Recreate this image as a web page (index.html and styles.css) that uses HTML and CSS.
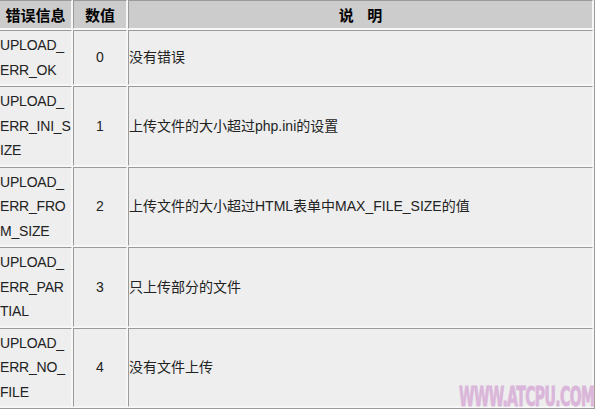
FILE: index.html
```html
<!DOCTYPE html>
<html lang="zh-CN">
<head>
<meta charset="utf-8">
<title>上传错误信息</title>
<link rel="stylesheet" href="styles.css">
</head>
<body>
<div class="wrap">
<table class="errors">
  <colgroup>
    <col class="c-name">
    <col class="c-num">
    <col class="c-desc">
  </colgroup>
  <thead>
    <tr>
      <th>错误信息</th>
      <th>数值</th>
      <th>说&nbsp;&nbsp;&nbsp;&nbsp;明</th>
    </tr>
  </thead>
  <tbody>
    <tr>
      <td class="name">UPLOAD_ERR_OK</td>
      <td class="num">0</td>
      <td class="desc">没有错误</td>
    </tr>
    <tr>
      <td class="name">UPLOAD_ERR_INI_SIZE</td>
      <td class="num">1</td>
      <td class="desc">上传文件的大小超过php.ini的设置</td>
    </tr>
    <tr>
      <td class="name">UPLOAD_ERR_FROM_SIZE</td>
      <td class="num">2</td>
      <td class="desc">上传文件的大小超过HTML表单中MAX_FILE_SIZE的值</td>
    </tr>
    <tr>
      <td class="name">UPLOAD_ERR_PARTIAL</td>
      <td class="num">3</td>
      <td class="desc">只上传部分的文件</td>
    </tr>
    <tr>
      <td class="name">UPLOAD_ERR_NO_FILE</td>
      <td class="num">4</td>
      <td class="desc">没有文件上传</td>
    </tr>
  </tbody>
</table>
<div class="watermark">WWW.ATCPU.COM</div>
</div>
</body>
</html>
```
FILE: styles.css
```css
html, body {
  margin: 0;
  padding: 0;
  background: #ffffff;
  overflow: hidden;
}

.wrap {
  position: relative;
  width: 597px;
  height: 412px;
  overflow: hidden;
}

.errors {
  margin: -2px 0 0 -3px;
  table-layout: fixed;
  border-collapse: separate;
  border-spacing: 1px;
  border: 1px solid;
  border-color: #f7f7f7 #9a9a9a #9a9a9a #f7f7f7;
  background: #f7f7f7;
  font-family: "Liberation Sans", "Noto Sans CJK SC", sans-serif;
  font-size: 14px;
  color: #222222;
}

.c-name { width: 73px; }
.c-num { width: 54px; }
.c-desc { width: 465px; }

.errors th,
.errors td {
  border: 1px solid;
  border-color: #9a9a9a #f7f7f7 #f7f7f7 #9a9a9a;
  background: #eeeeee;
}

.errors th {
  background: #cccccc;
  height: 27px;
  padding: 0;
  line-height: 27px;
  font-family: "Noto Sans CJK SC", sans-serif;
  font-size: 15px;
  font-weight: bold;
  color: #000000;
  text-align: center;
}

.errors td {
  padding: 2px 0;
  line-height: 24.5px;
  vertical-align: middle;
}

.name {
  word-break: break-all;
  letter-spacing: -0.2px;
  text-align: left;
}

.num {
  text-align: center;
}

.desc {
  text-align: left;
}

.watermark {
  position: absolute;
  left: 459px;
  top: 383px;
  font-family: "DejaVu Sans Condensed", "Liberation Sans Narrow", sans-serif;
  font-weight: bold;
  font-size: 26px;
  line-height: 28px;
  letter-spacing: -1px;
  color: #dab6da;
  -webkit-text-stroke: 0.9px #dab6da;
  transform: scaleX(0.6);
  transform-origin: left top;
  white-space: nowrap;
}
```
